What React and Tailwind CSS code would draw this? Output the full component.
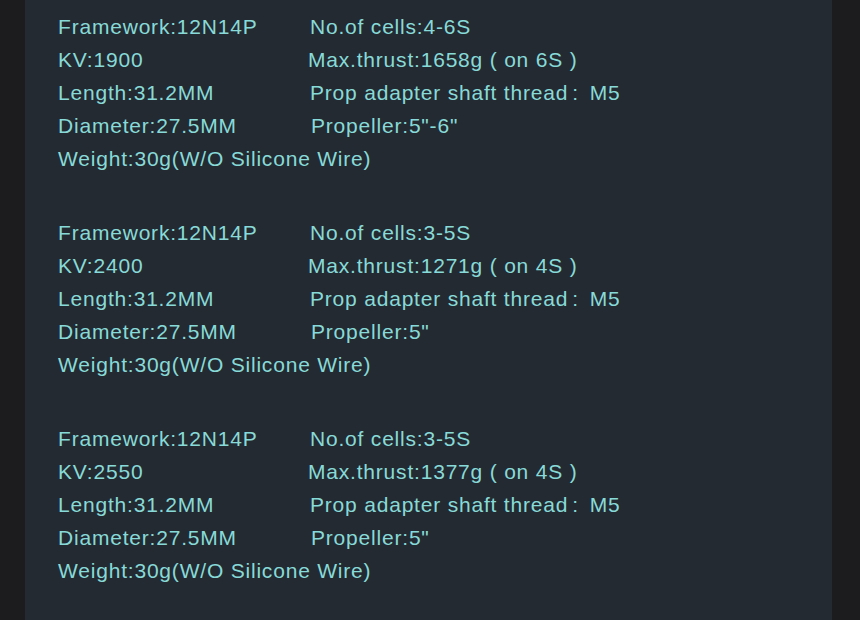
const specs = [
  {
    kv: "1900",
    cells: "4-6S",
    thrust: "1658g ( on 6S )",
    prop: '5"-6"',
  },
  {
    kv: "2400",
    cells: "3-5S",
    thrust: "1271g ( on 4S )",
    prop: '5"',
  },
  {
    kv: "2550",
    cells: "3-5S",
    thrust: "1377g ( on 4S )",
    prop: '5"',
  },
];

function SpecBlock({ spec }) {
  return (
    <div className="grid grid-cols-[250px_1fr] leading-[33px]">
      <div>Framework:12N14P</div>
      <div className="pl-[2px]">No.of cells:{spec.cells}</div>
      <div>KV:{spec.kv}</div>
      <div>Max.thrust:{spec.thrust}</div>
      <div>Length:31.2MM</div>
      <div className="pl-[2px]">
        Prop adapter shaft thread<span className="ml-[4px] mr-[11px]">:</span>M5
      </div>
      <div>Diameter:27.5MM</div>
      <div className="pl-[3px]">Propeller:{spec.prop}</div>
      <div className="col-span-2">Weight:30g(W/O Silicone Wire)</div>
    </div>
  );
}

export default function App() {
  return (
    <div className="w-[860px] h-[620px] bg-[#1c1c1f] flex overflow-hidden">
      <div className="ml-[25px] w-[807px] h-full bg-[#232a31] pl-[33px] pt-[10px] flex flex-col gap-[41px] text-[21px] tracking-[0.8px] text-[#88dad8] font-['Liberation_Sans',Arial,sans-serif]">
        {specs.map((s) => (
          <SpecBlock key={s.kv} spec={s} />
        ))}
      </div>
    </div>
  );
}
